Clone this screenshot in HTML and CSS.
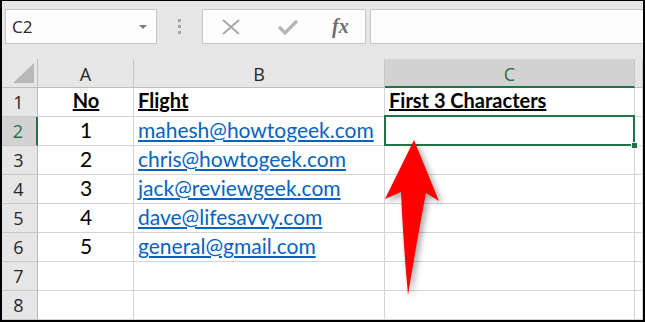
FILE: index.html
```html
<!DOCTYPE html>
<html lang="en">
<head>
  <meta charset="UTF-8" />
  <title>Excel - First 3 Characters</title>
  <link rel="stylesheet" href="styles.css">
</head>
<body>

  <div class="window">

    <div class="toolbar">
      <div class="name-box">
        <span>C2</span>
        <span class="caret"></span>
      </div>
      <div class="grip"><i></i><i></i><i></i></div>
      <div class="fx-buttons">
        <svg class="btn-icon" width="20" height="16" viewBox="0 0 20 16">
          <path d="M2 1 L18 15 M18 1 L2 15" stroke="#a8a8a8" stroke-width="2" fill="none"/>
        </svg>
        <svg class="btn-icon" width="20" height="16" viewBox="0 0 20 16">
          <path d="M1 8 L7 14 L19 2" stroke="#b4b4b4" stroke-width="3.2" fill="none"/>
        </svg>
        <span class="fx">fx</span>
      </div>
      <div class="formula-bar"></div>
    </div>

    <div class="sheet">
      <div class="hdr corner"><span class="corner-tri"></span></div>
      <div class="hdr col">A</div>
      <div class="hdr col">B</div>
      <div class="hdr col selected">C</div>
      <div class="hdr col"></div>

      <div class="hdr row">1</div>
      <div class="cell center bold">No</div>
      <div class="cell bold">Flight</div>
      <div class="cell bold">First 3 Characters</div>
      <div class="cell"></div>

      <div class="hdr row selected">2</div>
      <div class="cell center">1</div>
      <div class="cell link">mahesh@howtogeek.com</div>
      <div class="cell active"><span class="fill-handle"></span></div>
      <div class="cell"></div>

      <div class="hdr row">3</div>
      <div class="cell center">2</div>
      <div class="cell link">chris@howtogeek.com</div>
      <div class="cell"></div>
      <div class="cell"></div>

      <div class="hdr row">4</div>
      <div class="cell center">3</div>
      <div class="cell link">jack@reviewgeek.com</div>
      <div class="cell"></div>
      <div class="cell"></div>

      <div class="hdr row">5</div>
      <div class="cell center">4</div>
      <div class="cell link">dave@lifesavvy.com</div>
      <div class="cell"></div>
      <div class="cell"></div>

      <div class="hdr row">6</div>
      <div class="cell center">5</div>
      <div class="cell link">general@gmail.com</div>
      <div class="cell"></div>
      <div class="cell"></div>

      <div class="hdr row">7</div>
      <div class="cell"></div>
      <div class="cell"></div>
      <div class="cell"></div>
      <div class="cell"></div>

      <div class="hdr row">8</div>
      <div class="cell"></div>
      <div class="cell"></div>
      <div class="cell"></div>
      <div class="cell"></div>
    </div>

    <!-- red callout arrow pointing at C2 -->
    <svg class="arrow" width="90" height="180" viewBox="370 130 90 180">
      <path d="M414 140 L439 201 L426 193 Q417 240 408 295 Q403 240 401 192 L385 199 Z" fill="#ff0000"/>
    </svg>

  </div>

</body>
</html>
```

FILE: styles.css
```css
* {
  box-sizing: border-box;
}

body {
  margin: 0;
  background-color: #ffffff;
}

.window {
  position: relative;
  width: 645px;
  height: 322px;
  overflow: hidden;
  border: 2px solid #000000;
  border-top-width: 1px;
  background-color: #e6e6e6;
}

/* ---- formula bar row ---- */

.toolbar {
  height: 58px;
  display: flex;
  align-items: flex-start;
  padding: 8px 0 0 3px;
}

.name-box {
  width: 152px;
  height: 35px;
  background-color: #fdfdfd;
  border: 1px solid #c6c6c6;
  display: flex;
  align-items: center;
  justify-content: space-between;
  padding: 0 9px 0 6px;
  font-family: "Open Sans", sans-serif;
  font-size: 17px;
  color: #262626;
}

.caret {
  width: 0;
  height: 0;
  border-left: 4px solid transparent;
  border-right: 4px solid transparent;
  border-top: 4px solid #7b7b7b;
}

.grip {
  width: 45px;
  height: 35px;
  display: flex;
  flex-direction: column;
  align-items: center;
  justify-content: center;
  gap: 3px;
}

.grip i {
  width: 3px;
  height: 3px;
  background-color: #a6a6a6;
}

.fx-buttons {
  width: 164px;
  height: 35px;
  background-color: #fdfdfd;
  border: 1px solid #c6c6c6;
  display: flex;
  align-items: center;
  padding-left: 18px;
  gap: 37px;
}

.btn-icon {
  display: block;
}

.fx {
  font-family: "Liberation Serif", serif;
  font-style: italic;
  font-weight: bold;
  font-size: 20px;
  color: #6e6e6e;
  margin-left: -3px;
}

.formula-bar {
  flex: 1;
  height: 35px;
  margin-left: 4px;
  background-color: #fdfdfd;
  border: 1px solid #c6c6c6;
  border-right: none;
}

/* ---- grid ---- */

.sheet {
  display: grid;
  grid-template-columns: 36px 96px 251px 250px 1fr;
  grid-auto-rows: 29px;
}

.hdr {
  background-color: #e6e6e6;
  font-family: "Open Sans", sans-serif;
  font-size: 18px;
  color: #262626;
  display: flex;
  align-items: center;
  justify-content: center;
}

.hdr.col {
  border-right: 1px solid #c8c8c8;
  border-bottom: 1px solid #bdbdbd;
  padding-top: 2px;
}

.hdr.row {
  border-right: 1px solid #bdbdbd;
  border-bottom: 1px solid #c8c8c8;
  padding-right: 2px;
}

.hdr.corner {
  border-right: 1px solid #bdbdbd;
  border-bottom: 1px solid #bdbdbd;
  position: relative;
}

.corner-tri {
  position: absolute;
  right: 3px;
  bottom: 4px;
  width: 0;
  height: 0;
  border-left: 21px solid transparent;
  border-bottom: 20px solid #b8b8b8;
}

.hdr.col.selected {
  background-color: #d2d2d2;
  color: #217346;
  border-bottom: 2px solid #217346;
}

.hdr.row.selected {
  background-color: #d2d2d2;
  color: #217346;
  border-right: 2px solid #217346;
}

.cell {
  position: relative;
  background-color: #ffffff;
  border-right: 1px solid #d4d4d4;
  border-bottom: 1px solid #d4d4d4;
  font-family: "Lato", sans-serif;
  font-size: 21px;
  color: #000000;
  padding: 0 3px 3px 4px;
  display: flex;
  align-items: flex-end;
  white-space: nowrap;
}

.cell.center {
  justify-content: center;
}

.cell.bold {
  font-weight: bold;
  font-size: 20px;
  text-decoration: underline;
  padding-bottom: 4px;
}

.cell.link {
  color: #0563c1;
  text-decoration: underline;
}

.cell.active::after {
  content: "";
  position: absolute;
  top: -2px;
  left: -1px;
  right: -1px;
  bottom: -1px;
  border: 2px solid #217346;
}

.fill-handle {
  position: absolute;
  right: -4px;
  bottom: -4px;
  width: 7px;
  height: 7px;
  background-color: #217346;
  border: 1px solid #ffffff;
  z-index: 1;
}

/* ---- callout ---- */

.arrow {
  position: absolute;
  left: 368px;
  top: 129px;
  filter: drop-shadow(3px 3px 3px rgba(0, 0, 0, 0.35));
}
```
